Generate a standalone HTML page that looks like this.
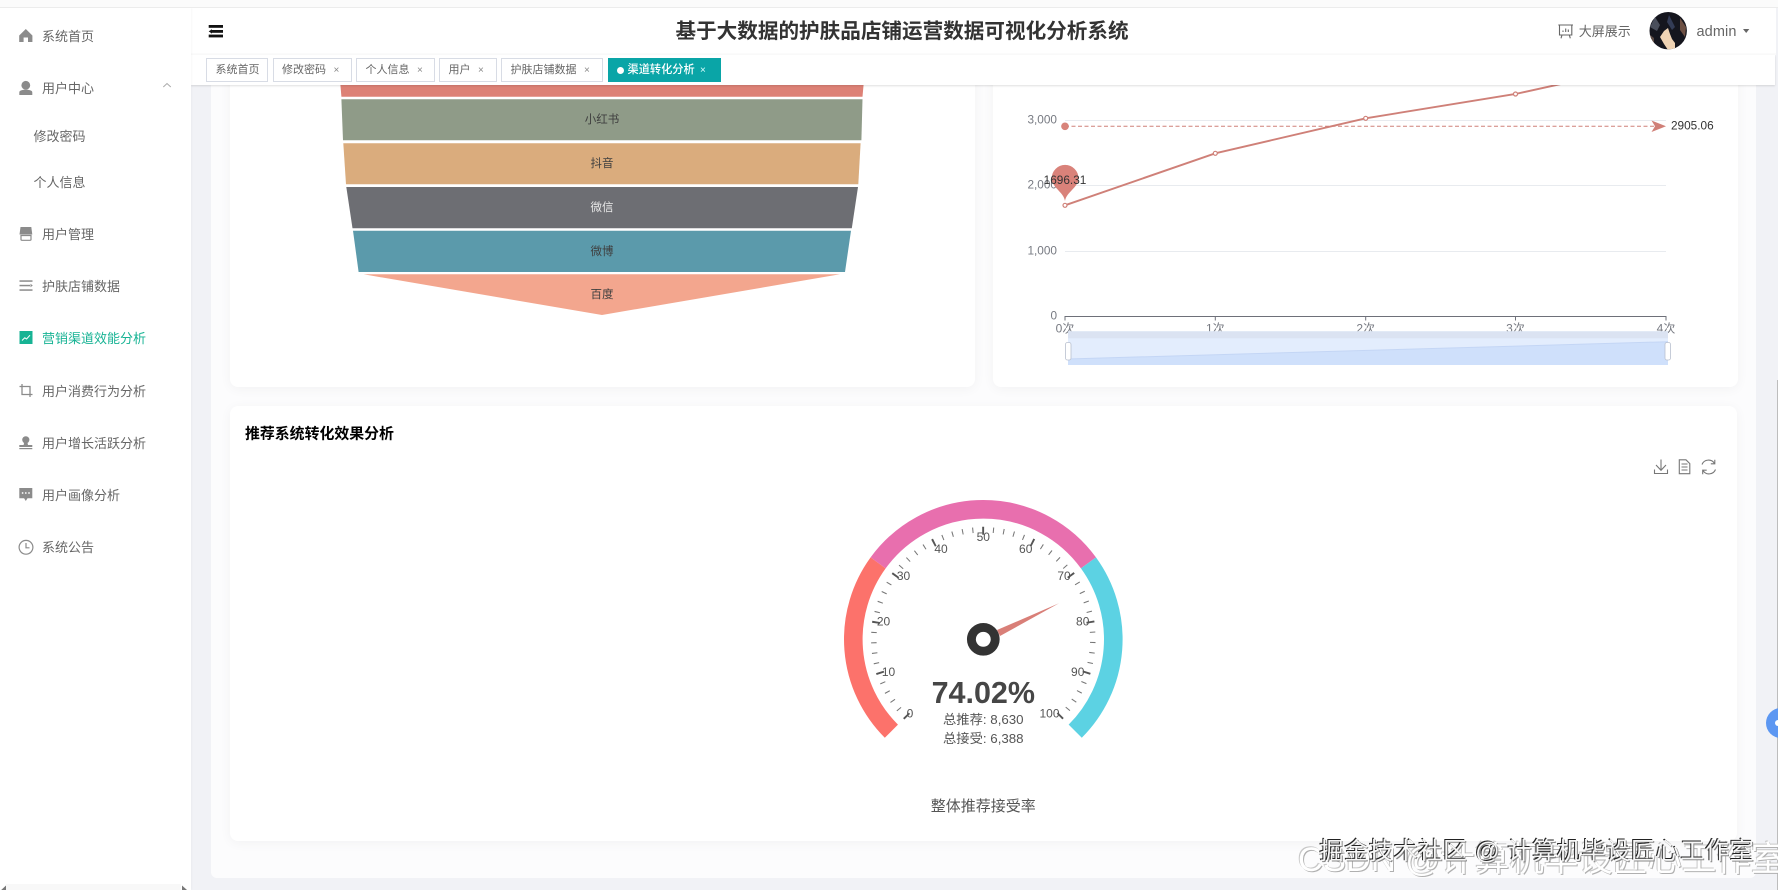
<!DOCTYPE html>
<html lang="zh">
<head>
<meta charset="utf-8">
<title>基于大数据的护肤品店铺运营数据可视化分析系统</title>
<style>
html,body{margin:0;padding:0;width:1778px;height:890px;overflow:hidden;background:#f1f2f6;font-family:"Liberation Sans","Noto Sans CJK SC",sans-serif;}
.abs{position:absolute;}
#top{left:0;top:0;width:1778px;height:7px;background:#fbfbfb;border-bottom:1px solid #ececec;z-index:6;}
#side{left:0;top:8px;width:191px;height:882px;background:#fff;box-shadow:1px 0 2px rgba(0,0,0,.03);z-index:5;}
.m{position:absolute;left:42px;line-height:20px;height:20px;font-size:13px;color:#666;white-space:nowrap;}
.sub{left:33.5px;}
.ic{position:absolute;left:0;top:0;z-index:6;}
#panel{left:210.5px;top:60px;width:1545.5px;height:818px;background:#fcfcfd;border-radius:0 0 6px 6px;z-index:1;}
.card{position:absolute;background:#fff;border-radius:8px;box-shadow:0 2px 12px rgba(0,0,0,.045);z-index:1;}
#hdr{left:191px;top:8px;width:1585px;height:45px;background:#fff;z-index:4;}
#tabs{left:191px;top:55px;width:1584px;height:30px;background:#fff;box-shadow:0 1px 2px rgba(0,0,0,.13);z-index:4;}
#gap{left:191px;top:53px;width:1585px;height:2px;background:#fbfbfb;z-index:4;}
.tab{position:absolute;top:58px;height:23.7px;box-sizing:border-box;border:1px solid #d8dce5;background:#fff;color:#666;font-size:11px;line-height:22px;white-space:nowrap;z-index:5;}
.tab span{position:absolute;top:0;}
.tab i{position:absolute;top:1px;font-style:normal;font-size:10px;color:#888;}
#active{left:607.5px;width:113px;background:#0aa5a7;border-color:#0aa5a7;color:#fff;font-weight:500;}
#active b{position:absolute;left:8.5px;top:7.5px;width:7px;height:7px;border-radius:50%;background:#fff;}
#title{left:191px;width:1585px;top:18px;height:28px;line-height:28px;text-align:left;font-size:20.6px;font-weight:700;color:#333;z-index:5;white-space:nowrap;}
#title span{position:absolute;left:484.5px;}
.rt{font-size:13px;color:#666;line-height:20px;height:20px;z-index:5;white-space:nowrap;}
#charts{left:0;top:0;z-index:2;}
#wm1,#wm2{white-space:nowrap;z-index:8;line-height:36px;height:36px;}
#wm2{left:1298px;top:842px;font-size:34.5px;color:#fff;text-shadow:1px 1px 0 #b0b0b0,-1px -1px 0 #c8c8c8;}
#wm1{left:1319.5px;top:834px;font-size:24px;color:#f7f7f7;text-shadow:-1px -1px 0 #222,1px 1px 0 #888;letter-spacing:.7px;}
</style>
</head>
<body>
<div class="abs" id="top"></div>
<div class="abs" id="panel"></div>
<div class="card" style="left:229.5px;top:70px;width:745px;height:317px;"></div>
<div class="card" style="left:993px;top:70px;width:744.5px;height:317px;"></div>
<div class="card" style="left:229.5px;top:406px;width:1507.5px;height:435px;"></div>

<svg class="abs" id="charts" width="1778" height="890" viewBox="0 0 1778 890" font-family="'Liberation Sans','Noto Sans CJK SC',sans-serif">
  <!-- funnel -->
  <polygon points="340,80 864,80 862.5,96.7 341.4,96.7" fill="#dd8176"/>
  <polygon points="341.4,99.3 862.5,99.3 861.4,140.3 343,140.3" fill="#8f9b88"/>
  <polygon points="343.3,143.3 860.6,143.3 858.3,184.3 346,184.3" fill="#daac7d"/>
  <polygon points="346.3,187 858,187 851.8,228.3 352.5,228.3" fill="#6d6e73"/>
  <polygon points="353,230.7 851,230.7 845,272 358.6,272" fill="#5b9aab"/>
  <polygon points="363.6,274.3 840,274.3 602,315" fill="#f3a68e"/>
  <g font-size="11.5" fill="#3f3f3f" text-anchor="middle">
    <text x="602" y="123">小红书</text>
    <text x="602" y="167">抖音</text>
    <text x="602" y="211" fill="#e8e8e8">微信</text>
    <text x="602" y="255">微博</text>
    <text x="602" y="298">百度</text>
  </g>
  <!-- line chart grid -->
  <g stroke="#e8ebef" stroke-width="1">
    <line x1="1065" x2="1666" y1="120.5" y2="120.5"/>
    <line x1="1065" x2="1666" y1="185.5" y2="185.5"/>
    <line x1="1065" x2="1666" y1="251.5" y2="251.5"/>
  </g>
  <g font-size="11.8" fill="#777a82" text-anchor="end">
    <text x="1057" y="123.5">3,000</text>
    <text x="1057" y="188.5">2,000</text>
    <text x="1057" y="254.5">1,000</text>
    <text x="1057" y="319.5">0</text>
  </g>
  <path d="M1065 320.5V316.5H1666V320.5M1215.3 316.5V320.5M1365.7 316.5V320.5M1515.5 316.5V320.5" fill="none" stroke="#6e7079" stroke-width="1"/>
  <g font-size="12" fill="#777a82" text-anchor="middle">
    <text x="1065" y="332.5">0次</text>
    <text x="1215.3" y="332.5">1次</text>
    <text x="1365.7" y="332.5">2次</text>
    <text x="1515.5" y="332.5">3次</text>
    <text x="1666" y="332.5">4次</text>
  </g>
  <!-- data zoom -->
  <rect x="1068" y="331.3" width="600" height="33.7" fill="#e3edfd"/>
  <polygon points="1068,359 1668,341.7 1668,365 1068,365" fill="#cfe0fb"/>
  <line x1="1068" y1="359" x2="1668" y2="341.7" stroke="#c4d6f5" stroke-width="1"/>
  <rect x="1068" y="331.3" width="600" height="7" fill="#dbe3f2"/>
  <rect x="1065.5" y="342.5" width="5.5" height="17.5" rx="2" fill="#fff" stroke="#b9c0cf" stroke-width=".8"/>
  <rect x="1665" y="342.5" width="5.5" height="17.5" rx="2" fill="#fff" stroke="#b9c0cf" stroke-width=".8"/>
  <!-- line -->
  <polyline points="1065,205.3 1215.3,153.3 1365.7,118.3 1515.5,94 1666,60.8" fill="none" stroke="#cf8078" stroke-width="1.9"/>
  <g fill="#fff" stroke="#cf8078" stroke-width="1.2">
    <circle cx="1065" cy="205.3" r="2"/>
    <circle cx="1215.3" cy="153.3" r="2"/>
    <circle cx="1365.7" cy="118.3" r="2"/>
    <circle cx="1515.5" cy="94" r="2"/>
  </g>
  <line x1="1065" x2="1654" y1="126.3" y2="126.3" stroke="#cf8078" stroke-width="1" stroke-dasharray="4 2.5"/>
  <circle cx="1065" cy="126.3" r="3.8" fill="#d8837a"/>
  <polygon points="1651.5,120.5 1666,126.3 1651.5,132 1655,126.3" fill="#d07f77"/>
  <text x="1671" y="129.5" font-size="11.8" fill="#333">2905.06</text>
  <path d="M1065 201C1063.5 192 1051.7 187.5 1051.7 178.3A13.4 13.4 0 0 1 1078.5 178.3C1078.5 187.5 1066.5 192 1065 201Z" fill="#d9827a"/>
  <text x="1065" y="184" font-size="11.8" fill="#333" text-anchor="middle">1696.31</text>
  <!-- card 3 title -->
  <text x="245" y="438.5" font-size="14.9" font-weight="700" fill="#000">推荐系统转化效果分析</text>
  <!-- toolbox -->
  <g fill="none" stroke="#777" stroke-width="1.1">
    <path d="M1661 459.5V470M1656 465L1661 470.3L1666 465M1654.5 469.5V473.5H1667.5V469.5"/>
    <path d="M1679.3 459.8H1686L1689.8 463.6V473.7H1679.3ZM1681.5 464H1687.5M1681.5 467H1687.5M1681.5 470H1687.5"/>
    <path d="M1702 464.5A7 7 0 0 1 1714.5 463.5M1715.5 469.5A7 7 0 0 1 1703 470.5M1714.8 459.8V463.8H1710.8M1702.7 474.2V470.2H1706.7"/>
  </g>
  <!-- gauge -->
  <g fill="none" stroke-width="18.6">
    <path d="M891.38 731.22A130 130 0 0 1 878.13 562.89" stroke="#fc726b"/>
    <path d="M878.13 562.89A130 130 0 0 1 1088.47 562.89" stroke="#e86fae"/>
    <path d="M1088.47 562.89A130 130 0 0 1 1075.22 731.22" stroke="#5cd2e3"/>
  </g>
  <path d="M907.23 718.06A109.5 109.5 0 1 1 1059.37 718.06" pathLength="272" fill="none" stroke="#777" stroke-width="5.5" stroke-dasharray="0.55 4.85" stroke-dashoffset="-0.725"/>
  <path d="M907.93 717.34A108.5 108.5 0 1 1 1058.67 717.34" pathLength="272" fill="none" stroke="#555" stroke-width="8" stroke-dasharray="1 26" stroke-dashoffset="-0.5"/>
  <g font-size="12" fill="#555" text-anchor="middle">
    <text x="910" y="717.5">0</text>
    <text x="888.5" y="676">10</text>
    <text x="883.5" y="625.5">20</text>
    <text x="903.5" y="580">30</text>
    <text x="941" y="553">40</text>
    <text x="983.3" y="541">50</text>
    <text x="1025.7" y="553">60</text>
    <text x="1064" y="580">70</text>
    <text x="1082.7" y="625.5">80</text>
    <text x="1077.7" y="676">90</text>
    <text x="1049.5" y="717.5">100</text>
  </g>
  <polygon points="997,630 1059,603.3 1000,636" fill="#d97f78"/>
  <circle cx="983.3" cy="639.3" r="11.9" fill="#fff" stroke="#333" stroke-width="8.9"/>
  <text x="983.3" y="703" font-size="30.5" font-weight="700" fill="#464646" text-anchor="middle">74.02%</text>
  <text x="983.3" y="724" font-size="13.3" fill="#555" text-anchor="middle">总推荐: 8,630</text>
  <text x="983.3" y="743" font-size="13.3" fill="#555" text-anchor="middle">总接受: 6,388</text>
  <text x="983.3" y="811" font-size="15" fill="#555" text-anchor="middle">整体推荐接受率</text>
</svg>

<!-- header -->
<div class="abs" id="hdr"></div>
<div class="abs" id="gap"></div>
<div class="abs" id="tabs"></div>
<div class="abs" id="title"><span>基于大数据的护肤品店铺运营数据可视化分析系统</span></div>
<div class="abs rt" style="left:1578.7px;top:22px;">大屏展示</div>
<div class="abs rt" style="left:1696.5px;top:22px;font-size:14.5px;letter-spacing:.1px;">admin</div>

<div class="tab" style="left:206px;width:62px;"><span style="left:8.5px;">系统首页</span></div>
<div class="tab" style="left:272.5px;width:79.5px;"><span style="left:8.5px;">修改密码</span><i style="left:60px;">×</i></div>
<div class="tab" style="left:356px;width:79px;"><span style="left:8.5px;">个人信息</span><i style="left:60px;">×</i></div>
<div class="tab" style="left:439px;width:58px;"><span style="left:8.5px;">用户</span><i style="left:38px;">×</i></div>
<div class="tab" style="left:501px;width:102px;"><span style="left:8.5px;">护肤店铺数据</span><i style="left:82px;">×</i></div>
<div class="tab" id="active"><b></b><span style="left:19px;font-size:11.2px;">渠道转化分析</span><i style="left:91.5px;color:#dff;">×</i></div>

<!-- sidebar -->
<div class="abs" id="side"></div>
<div class="m" style="top:27px;z-index:6;">系统首页</div>
<div class="m" style="top:79px;z-index:6;">用户中心</div>
<div class="m sub" style="top:127px;z-index:6;">修改密码</div>
<div class="m sub" style="top:173px;z-index:6;">个人信息</div>
<div class="m" style="top:225px;z-index:6;">用户管理</div>
<div class="m" style="top:277px;z-index:6;">护肤店铺数据</div>
<div class="m" style="top:329px;z-index:6;color:#17b394;">营销渠道效能分析</div>
<div class="m" style="top:381.5px;z-index:6;">用户消费行为分析</div>
<div class="m" style="top:434px;z-index:6;">用户增长活跃分析</div>
<div class="m" style="top:486px;z-index:6;">用户画像分析</div>
<div class="m" style="top:538px;z-index:6;">系统公告</div>

<svg class="ic" width="1778" height="890" viewBox="0 0 1778 890">
  <g fill="#8b8b8b">
    <!-- home -->
    <path d="M19.2 35.5L25.8 29L32.4 35.5V42H28V37.5H23.6V42H19.2Z"/>
    <!-- user -->
    <circle cx="25.8" cy="85.3" r="4.4"/>
    <path d="M19.3 95V92.5C19.3 90.5 22 89.8 25.8 89.8S32.3 90.5 32.3 92.5V95Z"/>
    <!-- chair -->
    <path d="M20.5 227H31.3L32.3 234.5H19.5Z"/>
    <path d="M21 235.5H31V239.5Q31 240.3 30 240.3H22Q21 240.3 21 239.5Z" fill="none" stroke="#8b8b8b" stroke-width="1.2"/>
    <!-- list -->
    <rect x="19.5" y="280.3" width="13" height="1.5"/>
    <rect x="19.5" y="284.8" width="10.5" height="1.5"/>
    <rect x="19.5" y="289.3" width="13" height="1.5"/>
    <polygon points="30.5,283.8 32.8,285.5 30.5,287.2"/>
    <!-- stamp -->
    <circle cx="25.8" cy="439.8" r="3.6"/>
    <path d="M24.3 442H27.3L28 445H32.3V447H19.3V445H23.6Z"/>
    <rect x="19.3" y="448" width="13" height="1.2"/>
    <!-- message -->
    <path d="M19.3 488H32.3V498.3H27.5L25.8 501L24.1 498.3H19.3Z"/>
  </g>
  <g fill="#fff"><circle cx="22.6" cy="493" r=".9"/><circle cx="25.8" cy="493" r=".9"/><circle cx="29" cy="493" r=".9"/></g>
  <!-- active chart icon -->
  <rect x="19.5" y="331" width="13" height="13" fill="#17b394"/>
  <path d="M22 340.5L24.8 337.8L26.6 339L30 335.2" fill="none" stroke="#fff" stroke-width="1"/>
  <!-- crop -->
  <path d="M22 384V394.5H32.5M19.5 386.5H30V397" fill="none" stroke="#8b8b8b" stroke-width="1.3"/>
  <!-- clock -->
  <circle cx="26" cy="547.3" r="6.9" fill="none" stroke="#8b8b8b" stroke-width="1.2"/>
  <path d="M26 543V547.8H29.5" fill="none" stroke="#8b8b8b" stroke-width="1.2"/>
  <!-- chevron -->
  <path d="M163.3 87L167 83.5L170.8 87" fill="none" stroke="#aaa" stroke-width="1"/>
  <!-- hamburger -->
  <rect x="208.7" y="25" width="14.3" height="2.8" fill="#111"/>
  <rect x="212" y="30" width="11" height="2.8" fill="#111"/>
  <rect x="208.7" y="34.6" width="14.3" height="2.8" fill="#111"/>
  <polygon points="208.7,31.4 212,29.3 212,33.6" fill="#111"/>
  <!-- screen icon -->
  <path d="M1558.3 25H1573M1559.5 25V35H1571.8V25M1562 35L1561 38.3M1569.3 35L1570.3 38.3M1563 32V30.5M1565.7 32V28.5M1568.3 32V29.5" fill="none" stroke="#666" stroke-width="1.1"/>
  <!-- caret -->
  <polygon points="1743,29 1749.3,29 1746.2,33" fill="#666"/>
  <!-- avatar -->
  <defs><clipPath id="av"><circle cx="1668.2" cy="30.7" r="18.7"/></clipPath></defs>
  <g clip-path="url(#av)">
    <rect x="1649" y="12" width="38" height="38" fill="#15161e"/>
    <path d="M1650 27L1655 17L1660 25L1657 31Z" fill="#4a4f5c"/>
    <path d="M1668 50L1664 44L1660 37L1664 31L1668 28L1670 34L1672 39L1675 43L1675 50Z" fill="#efd3b4"/>
    <path d="M1669 15L1675 27L1672 30L1667 22Z" fill="#333c56"/>
    <path d="M1680 18L1686 27L1685 37L1680 30Z" fill="#6d5044"/>
    <path d="M1649 34L1654 38L1654 46L1649 44Z" fill="#5b4a44"/>
  </g>
  <!-- bottom scroll arrows -->
  <rect x="6" y="884" width="175" height="6" fill="#f8f8f8"/>
  <polygon points="6,885.5 1.2,890 6,890" fill="#777"/>
  <polygon points="182,885.5 187,890 182,890" fill="#777"/>
  <!-- right edge -->
  <rect x="1777" y="380" width="1" height="510" fill="#bdbdbd"/>
  <circle cx="1781" cy="723" r="15" fill="#5c97f2"/>
  <circle cx="1778" cy="723" r="3" fill="#fff"/>
</svg>
<div class="abs" id="wm2">CSDN @计算机毕设匠心工作室</div>
<div class="abs" id="wm1">掘金技术社区 @ 计算机毕设匠心工作室</div>
</body>
</html>
